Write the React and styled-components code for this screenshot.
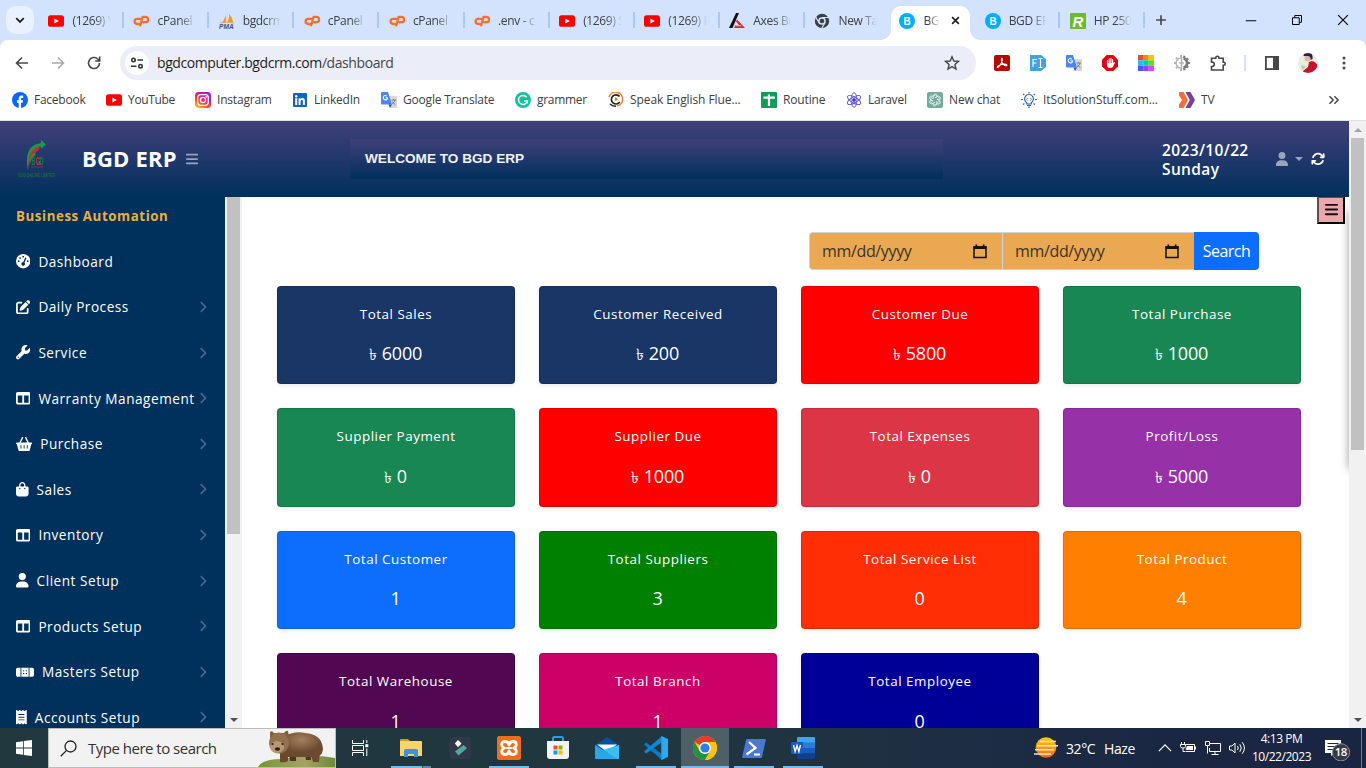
import React from "react";
import styled, { createGlobalStyle, css } from "styled-components";
import {
  FaGaugeHigh, FaPenToSquare, FaWrench, FaTableColumns, FaBasketShopping, FaBagShopping,
  FaUser, FaBandage, FaReceipt, FaAngleRight, FaBars, FaArrowsRotate,
} from "react-icons/fa6";

const Global = createGlobalStyle`
  *, *::before, *::after { box-sizing: border-box; }
  body { margin: 0; overflow: hidden; font-family: "Open Sans", "Noto Sans", sans-serif; }
  svg { display: block; flex: none; }
`;

const Screen = styled.div`
  width: 1366px; height: 768px; overflow: hidden;
  display: flex; flex-direction: column; background: #fff;
`;

/* ---------- browser chrome ---------- */
const TabStrip = styled.div`
  height: 40px; flex: none; display: flex; background: #d3e3fd; padding-left: 6px;
`;
const TabSearch = styled.div`
  width: 28px; height: 28px; margin: 6px 4px 0 0; border-radius: 10px; background: #e9f1fe;
  display: flex; align-items: center; justify-content: center;
`;
const TabBox = styled.div`
  width: 85.12px; height: 40px; flex: none; display: flex; align-items: center;
  padding: 1px 12px 0 10.3px; position: relative;
  &::after {
    content: ""; position: absolute; right: -1px; top: 12px; width: 2px; height: 16px;
    background: ${(p) => (p.$bar ? "#a8c7fa" : "transparent")};
  }
  ${(p) => p.$active && css`
    &::before {
      content: ""; position: absolute; inset: 6px 4px 0 2px; background: #fff; border-radius: 10px 10px 0 0;
    }
  `}
`;
const Flare = styled.i`
  position: absolute; bottom: 0; width: 10px; height: 10px;
  ${(p) => p.$left
    ? "left: -8px; background: radial-gradient(circle at 0 0, transparent 9.5px, #fff 10px);"
    : "right: -6px; background: radial-gradient(circle at 100% 0, transparent 9.5px, #fff 10px);"}
`;
const TabIcon = styled.span`width: 16px; height: 16px; flex: none; position: relative;`;
const TabTitle = styled.span`
  margin-left: 8.2px; width: ${(p) => p.$w || 39}px; overflow: hidden; white-space: nowrap; position: relative;
  font-size: 12px; line-height: 18px; color: #3c4043; font-weight: 500; letter-spacing: -0.35px;
  mask-image: linear-gradient(90deg, #000 ${(p) => (p.$w ? 30 : 58)}%, transparent 100%);
`;
const TabClose = styled.span`position: relative; margin-left: 11px;`;
const NewTab = styled.div`width: 34px; height: 40px; display: flex; align-items: center; justify-content: center;`;
const WindowButtons = styled.div`
  margin-left: auto; display: flex; align-items: center; gap: 34px; padding-right: 17px; height: 40px;
`;

const Toolbar = styled.div`
  height: 46px; flex: none; background: #fff; display: flex; align-items: center; border-radius: 8px 8px 0 0;
`;
const ToolbarBack = styled.div`background: #d3e3fd; flex: none;`;
const NavIcons = styled.div`display: flex; gap: 20px; padding-left: 14px; width: 120px;`;
const Omnibox = styled.div`
  width: 856px; height: 34px; border-radius: 17px; background: #ebeef8; display: flex; align-items: center; padding: 0 16px 0 5px;
`;
const SiteInfo = styled.span`
  width: 24px; height: 24px; border-radius: 50%; background: #fff; display: flex; align-items: center; justify-content: center;
`;
const Url = styled.span`
  margin-left: 8px; flex: 1; font-size: 14px; color: #1f1f1f; letter-spacing: -0.42px; white-space: nowrap; margin-top: -1px;
  span { color: #474747; }
`;
const Extensions = styled.div`
  display: flex; align-items: center; gap: 20px; padding-left: 18px; & > svg { width: 16px; height: 16px; }
`;
const Splitter = styled.i`width: 2px; height: 16px; background: #d3e3fd; margin: 0 -2px;`;
const Avatar = styled.span`width: 20px; height: 20px; border-radius: 50%; overflow: hidden; margin: 0 -2px;`;

const Bookmarks = styled.div`
  height: 35px; flex: none; display: flex; align-items: center; padding: 0 0 7px 12px; background: #fff;
  border-bottom: 1px solid #dfe3e3;
`;
const Bookmark = styled.div`
  width: ${(p) => p.$w}px; flex: none; display: flex; align-items: center; gap: 6px;
  font-size: 12px; line-height: 18px; color: #3c4043; white-space: nowrap; font-weight: 500; letter-spacing: ${(p) => p.$ls}px;
  svg { width: 16px; height: 16px; }
`;
const MoreMarks = styled.div`margin-left: auto; padding-right: 26px;`;

/* ---------- web page ---------- */
const Page = styled.div`height: 607px; flex: none; display: flex; overflow: hidden;`;
const Site = styled.div`width: 1349px; display: flex; flex-direction: column; height: 607px;`;
const Header = styled.header`
  height: 76px; flex: none; display: flex; align-items: center; color: #fff;
  background: linear-gradient(#413f7a, #00305c);
`;
const LogoBox = styled.div`width: 82px; padding-left: 17px;`;
const Brand = styled.div`
  width: 103px; font-weight: 700; font-size: 22px; line-height: 30px; padding-bottom: 2px; letter-spacing: 0.2px; white-space: nowrap;
`;
const Burger = styled.div`width: 165px; color: #9aa3bd;`;
const Marquee = styled.div`
  width: 593px; height: 40px; padding-left: 15px; background: linear-gradient(#413f7a, #00305c); color: #eef1f6;
  font: 600 13.6px/39px "Liberation Sans", Arial, sans-serif;
`;
const Today = styled.div`
  width: 113px; margin-left: 219px; font-weight: 600; font-size: 15.5px; line-height: 19px; letter-spacing: 0.36px; margin-top: 1px;
`;
const UserMenu = styled.div`display: flex; align-items: center; color: #9aa3bd; gap: 6px;`;
const Caret = styled.i`border: 4px solid transparent; border-top-color: currentColor; border-bottom: 0;`;
const Refresh = styled.div`margin-left: 8px; color: #fff;`;

const Body = styled.div`flex: 1; display: flex; min-height: 0;`;
const Sidebar = styled.nav`width: 225px; background: #00305c; overflow: hidden;`;
const Heading = styled.div`
  padding: 10px 16px 0; height: 41.6px; font-weight: 700; font-size: 13.3px; line-height: 19px; letter-spacing: 0.58px; color: #eaae43;
`;
const NavItem = styled.a`
  display: flex; align-items: center; height: 45.6px; padding: 0 16px; color: #fff;
  font-size: 13.6px; letter-spacing: 0.52px; white-space: nowrap; font-weight: 500;
  & > svg:first-child { height: 14.4px; width: ${(p) => p.$icon}px; }
  & > span { margin-left: 8px; flex: 1; width: 0; }
`;
const Arrow = styled(FaAngleRight)`color: #46688a; margin-right: -1px;`;

const Scroll = styled.div`
  width: 17px; flex: none; background: #f1f1f1; display: flex; flex-direction: column; align-items: center; justify-content: space-between;
`;
const Thumb = styled.div`width: 13px; height: ${(p) => p.$h}px; background: #c1c1c1;`;
const ScrollTop = styled.div`display: flex; flex-direction: column; align-items: center;`;
const ArrowBox = styled.div`
  height: 17px; display: flex; align-items: center;
  &::before {
    content: ""; border: 4px solid transparent;
    ${(p) => (p.$up ? "border-bottom-color: #a3a3a3; border-top: 0;" : "border-top-color: #505050; border-bottom: 0;")}
  }
`;

const Main = styled.main`
  flex: 1; position: relative; overflow: hidden; padding: 35px 48px 0 35px; background: #fff;
`;
const EdgeShadow = styled.i`
  position: absolute; top: 14px; right: -10px; width: 10px; height: 258px; box-shadow: 0 0 10px rgba(0, 0, 0, 0.4);
`;
const PanelToggle = styled.button`
  position: absolute; top: 0; right: 4px; width: 28px; height: 27px; padding: 0 0 2px; display: flex; align-items: center; justify-content: center;
  background: #eea5ab; border: 2px outset #000; border-top-width: 1px; color: #111;
`;
const Filter = styled.div`display: flex; height: 38px; margin-left: 532px; font-size: 16px;`;
const DateField = styled.div`
  width: ${(p) => p.$w}px; border: 1px solid #ced4da; border-right: 0; border-radius: ${(p) => (p.$first ? "4px 0 0 4px" : 0)};
  background: #eaa852; color: #3b3424; display: flex; align-items: center; justify-content: space-between; padding: 0 15px 0 12px;
  letter-spacing: -0.35px;
`;
const SearchButton = styled.button`
  width: 65px; border: 0; padding: 0; background: #0d6efd; color: #fff; border-radius: 0 4px 4px 0;
  font: 16px "Open Sans", sans-serif; letter-spacing: -0.5px;
`;
const Cards = styled.div`margin-top: 16px; display: grid; grid-template-columns: repeat(4, 238px); gap: 24px;`;
const Card = styled.div`
  height: 98.4px; border-radius: 4px; border: 1px solid rgba(0, 0, 0, 0.125); background: ${(p) => p.$c};
  box-shadow: 0 2px 4px rgba(0, 0, 0, 0.075); color: #fff; text-align: center; display: flex; flex-direction: column; align-items: center;
`;
const CardTitle = styled.div`margin-top: 17px; font-size: 13.4px; line-height: 20px; letter-spacing: 0.54px; font-weight: 500;`;
const CardValue = styled.div`margin-top: 16.4px; font-size: 18px; line-height: 26px; letter-spacing: -0.15px; height: 26px; padding-right: 1px;`;
const Taka = styled.span`font-size: 16px; margin-right: 5px; line-height: 20px;`;

/* ---------- taskbar ---------- */
const Taskbar = styled.div`
  height: 40px; flex: none; display: flex; color: #fff; background: linear-gradient(90deg, #21383f 0%, #203640 50%, #1a2743 85%, #1a2542);
`;
const Start = styled.div`width: 48px; display: flex; align-items: center; justify-content: center;`;
const SearchBox = styled.div`
  width: 288px; border: 1px solid #bcbcbc; background: #f2f2f2; display: flex; align-items: center; padding-left: 11px; color: #333;
  font-size: 15px; letter-spacing: -0.5px; overflow: hidden;
  & > span { margin-left: 11px; flex: 1; white-space: nowrap; }
`;
const Apps = styled.div`display: flex; gap: 1px; margin-left: 3px;`;
const AppCell = styled.div`
  width: 48px; height: 40px; display: flex; align-items: center; justify-content: center; position: relative;
  background: ${(p) => (p.$on ? "#4e5f67" : "none")};
  &::after {
    content: ""; position: absolute; bottom: 0; height: 2px; left: ${(p) => (p.$on ? 0 : 4)}px; right: ${(p) => (p.$on ? 0 : 4)}px;
    background: ${(p) => (p.$run === "many" ? "linear-gradient(90deg, #76b9ed 31px, #34525f 31px, #34525f 32px, #5c88ac 32px)" : p.$run ? "#76b9ed" : "none")};
  }
`;
const Tray = styled.div`margin-left: auto; display: flex; align-items: center; height: 40px;`;
const Weather = styled.div`
  display: flex; align-items: center; font-size: 14px; letter-spacing: -0.4px; width: 124px;
  & > b { font-weight: 400; margin-left: 8px; width: 38px; }
`;
const TrayIcons = styled.div`display: flex; align-items: center; gap: 8px; width: 95px;`;
const Clock = styled.div`
  width: 57px; font-size: 12px; line-height: 18px; letter-spacing: -0.45px; white-space: nowrap;
  display: flex; flex-direction: column; align-items: center;
`;
const Notice = styled.div`width: 51px; padding-left: 15px;`;
const DesktopEdge = styled.i`width: 5px; height: 40px; border-left: 1px solid #6f788a;`;

/* ---------- small drawings ---------- */
const YouTube = () => (
  <svg width="16" height="16" viewBox="0 0 16 16"><rect y="2.2" width="16" height="11.6" rx="2.6" fill="#f00" /><path d="M6.4 5.4v5.2L10.8 8z" fill="#fff" /></svg>
);
const CPanel = () => (
  <svg width="17" height="16" viewBox="0 0 17 16" fill="none" stroke="#ff6c2c" strokeWidth="2.300" strokeLinecap="round" strokeLinejoin="round">
    <path d="M7.200 5.800H4.300a2.600 2.600 0 0 0-.2 5.200H6" /><path d="M7.200 12.300 9.600 3.800h2.800a2.700 2.700 0 0 1 0 5.400h-2.300" />
  </svg>
);
const Pma = () => (
  <svg width="16" height="16" viewBox="0 0 16 16">
    <path d="M2 10Q6 7 6.300 2Q7.800 6 7 10zM7.500 10Q10.500 6 10 1Q14 5 14 10z" fill="#f89c0e" /><path d="M1 10Q7 8.600 15 10" stroke="#d9b27a" fill="none" />
    <text x="0" y="15.500" fontSize="6.600" fontWeight="700" fontStyle="italic" fontFamily="Liberation Sans" fill="#4b4b7c">PMA</text>
  </svg>
);
const Axes = () => (
  <svg width="16" height="16" viewBox="0 0 16 16"><path d="M0 15 7 0h3L3.500 15z" fill="#111" /><path d="M8 6.500 16 15H5l1.600-3H10L7 8.600z" fill="#e0262e" /><path d="M7 12h4.500l1.200 1.200H6.500z" fill="#d3e3fd" opacity=".7" /></svg>
);
const ChromeGrey = () => (
  <svg width="16" height="16" viewBox="0 0 16 16"><circle cx="8" cy="8" r="7.200" fill="#3c4043" /><circle cx="8" cy="8" r="3.100" fill="none" stroke="#d3e3fd" strokeWidth="1.500" /><path d="M8 4.500h7M5 9.700 1.600 3.900M10.900 9.700 7.600 15.500" stroke="#d3e3fd" strokeWidth="1.200" /></svg>
);
const BLogo = () => (
  <svg width="16" height="16" viewBox="0 0 16 16"><circle cx="8" cy="8" r="8" fill="#00aeff" /><text x="8" y="11.600" textAnchor="middle" fontSize="10" fontWeight="700" fontFamily="Liberation Sans" fill="#fff">B</text></svg>
);
const RLogo = () => (
  <svg width="16" height="16" viewBox="0 0 16 16"><rect width="16" height="16" rx="1" fill="#6cbb2b" /><text x="8" y="13.500" textAnchor="middle" fontSize="15" fontWeight="700" fontStyle="italic" fontFamily="Liberation Sans" fill="#fff">R</text></svg>
);
const Facebook = () => (
  <svg viewBox="0 0 16 16"><circle cx="8" cy="8" r="8" fill="#0866ff" /><path d="M6.700 16v-5.300H4.900V8.200h1.800V7c0-2.300 1.100-3.400 3.100-3.400.6 0 1.100.1 1.400.2v2.100h-1c-.9 0-1.200.4-1.200 1.300v1h2.100l-.4 2.500H9V16z" fill="#fff" /></svg>
);
const Instagram = () => (
  <svg viewBox="0 0 16 16">
    <defs><linearGradient id="ig" x1="0.2" y1="1" x2="0.8" y2="0"><stop offset="0" stopColor="#ffc800" /><stop offset=".35" stopColor="#ff3d3d" /><stop offset=".65" stopColor="#e0158f" /><stop offset="1" stopColor="#8a22f0" /></linearGradient></defs>
    <rect width="16" height="16" rx="3.500" fill="url(#ig)" /><rect x="2.700" y="2.700" width="10.600" height="10.600" rx="3" fill="none" stroke="#fff" strokeWidth="1.300" /><circle cx="8" cy="8" r="2.600" fill="none" stroke="#fff" strokeWidth="1.300" /><circle cx="11.100" cy="4.900" r=".8" fill="#fff" />
  </svg>
);
const LinkedIn = () => (
  <svg viewBox="0 0 16 16"><rect x="1" y="1" width="14" height="14" rx="1" fill="#0a66c2" /><path d="M3.200 6.300h2V13h-2zM6.600 6.300h1.900v.9c.4-.7 1.100-1.100 2-1.100 1.800 0 2.400 1.100 2.400 2.900v4h-2V9.400c0-.9-.3-1.500-1.100-1.500s-1.200.6-1.200 1.500V13h-2z" fill="#fff" /><circle cx="4.200" cy="4.200" r="1.200" fill="#fff" /></svg>
);
const Translate = () => (
  <svg viewBox="0 0 16 16"><path d="M6 4h9a1 1 0 0 1 1 1v10a1 1 0 0 1-1 1H9z" fill="#d5d7da" /><path d="M1 0h6l4 12.500H1a1 1 0 0 1-1-1V1a1 1 0 0 1 1-1z" fill="#4a86f0" /><path d="M7.500 12.500H11L9 16z" fill="#2358c4" /><path d="M6.800 5.700H4.600M6.600 5.800a2.200 2.200 0 1 1-.8-1.800" stroke="#fff" fill="none" strokeWidth="1.100" /><path d="M10.500 8h4.500M12.700 7v1M14 8q-.7 3-3 4M11.500 9.500q1 2.200 3 3.300" stroke="#757b82" fill="none" strokeWidth=".9" /></svg>
);
const Grammarly = () => (
  <svg viewBox="0 0 16 16"><circle cx="8" cy="8" r="8" fill="#15c39a" /><path d="M11.600 5.200A4.500 4.500 0 1 0 12.400 9H9.200M12.400 9v2.500" stroke="#fff" strokeWidth="1.400" fill="none" /></svg>
);
const SpeakC = () => (
  <svg viewBox="0 0 16 16"><path d="M1 5A7 7 0 1 1 9 14" fill="none" stroke="#f27a2c" strokeWidth="1.500" /><path d="M11.600 4.600A4.600 4.600 0 1 0 11.800 10" fill="none" stroke="#222" strokeWidth="1.600" /><path d="M7 5 10.400 7.200 7 9.300z" fill="#f27a2c" /><path d="M2 12q2.500 2.500 6 2.200" fill="none" stroke="#222" strokeWidth="1.300" /></svg>
);
const Sheets = () => (
  <svg viewBox="0 0 16 16"><rect width="16" height="16" rx="1" fill="#0f9d58" /><path d="M2.500 5.700h11.500M8 2.500V14" stroke="#fff" strokeWidth="2.200" /></svg>
);
const Atom = () => (
  <svg viewBox="0 0 16 16" fill="none" stroke="#5a55e0" strokeWidth=".9"><ellipse cx="8" cy="8" rx="7.300" ry="2.900" transform="rotate(30 8 8)" /><ellipse cx="8" cy="8" rx="7.300" ry="2.900" transform="rotate(90 8 8)" /><ellipse cx="8" cy="8" rx="7.300" ry="2.900" transform="rotate(150 8 8)" /><circle cx="8" cy="8" r="1.500" fill="#3530d0" /></svg>
);
const Gpt = () => (
  <svg viewBox="0 0 16 16"><rect width="16" height="16" rx="2" fill="#74aa9c" />{[0, 60, 120, 180, 240, 300].map((a) => <path key={a} d="M8 5.800 10.200 4.500 12.600 5.900V8.600M6.100 6.900V4.200A2.400 2.400 0 0 1 10.200 2.700" transform={`rotate(${a} 8 8)`} fill="none" stroke="#e9f5f1" strokeWidth=".7" />)}</svg>
);
const Bulb = () => (
  <svg viewBox="0 0 16 16" fill="none" stroke="#2b5fa0" strokeWidth="1.100"><path d="M5.700 12V10.700A4.400 4.400 0 1 1 10.300 10.700V12z" /><path d="M6 13.500h4M7 15.200h2M8 0v1.500M2 1.800l1.300 1.200M14 1.800l-1.300 1.200M0 7.500h2M14 7.500h2M2 12.500l1.400-1M14 12.500l-1.400-1" /><path d="M6.800 6 5.500 7.300l1.300 1.300M9.200 6l1.300 1.300-1.300 1.300" strokeWidth=".8" /></svg>
);
const Tv = () => (
  <svg viewBox="0 0 16 16"><path d="M0 0h4.500l4.500 8-4.500 8H0V12.500L3 8 0 3.500z" fill="#f36f3a" /><path d="M6.500 0h5L16 8l-4.500 8h-5l4.300-8z" fill="#7b3f98" /></svg>
);
const Stroke = ({ d, s = 16, c = "#474747", w = 1.6, ...r }) => (
  <svg width={s} height={s} viewBox="0 0 16 16" fill="none" stroke={c} strokeWidth={w} {...r}><path d={d} /></svg>
);
const Tune = () => (
  <svg width="14" height="14" viewBox="0 0 14 14" fill="none" stroke="#333" strokeWidth="1.600"><circle cx="3.500" cy="4" r="1.700" /><path d="M7.500 4H13M1 10.200h5.500" /><circle cx="10.500" cy="10.200" r="1.700" /></svg>
);
const Acrobat = () => (
  <svg viewBox="0 0 16 16"><rect width="16" height="16" rx="2" fill="#b30b00" /><path d="M7.600 3.300c1.500 0 .5 4-1.600 7-1.400 2-2.700 2.700-2.800 1.800-.1-1.200 4-3 7-3 3.300 0 3.200 1.700 1.800 1.700-2.200 0-5.500-4.300-4.400-7.500z" fill="none" stroke="#fff" strokeWidth="1.100" /></svg>
);
const Fi = () => (
  <svg viewBox="0 0 16 16"><path d="M0 0h11l5 4v8l-5 4H0z" fill="#3fa3e3" /><path d="M3 12V4.500h4M3 8h3.500M8.500 3.500h1.300q.7 0 .7.700v7.600q0 .7-.7.700H8.500M12.500 3.500h-1.300q-.7 0-.7.700M12.500 12.500h-1.300q-.7 0-.7-.7" stroke="#fff" fill="none" strokeWidth="1.100" /></svg>
);
const Hand = () => (
  <svg viewBox="0 0 16 16"><path d="M4.700 0h6.600L16 4.700v6.600L11.300 16H4.700L0 11.300V4.700z" fill="#e4000f" /><path d="M5.500 9V5.500M7.200 8V3.800M8.900 8V3.500M10.600 9V4.700" stroke="#fff" strokeWidth="1.200" strokeLinecap="round" /><path d="M4.900 8h6.300l1.200-1q.8.200.4 1L11 11.700Q10 13 8.300 13 4.900 13 4.900 9.700z" fill="#fff" /></svg>
);
const Rainbow = () => (
  <svg viewBox="0 0 16 16"><path d="M0 0h5.300v5.300H0z" fill="#ff4136" /><path d="M5.300 0h5.400v5.300H5.300z" fill="#ff8a00" /><path d="M10.700 0H16v5.300h-5.300z" fill="#ffc400" /><path d="M0 5.300h5.300v5.400H0z" fill="#28b8f5" /><path d="M5.300 5.300h5.400v5.400H5.300z" fill="#10cf8c" /><path d="M10.700 5.300H16v5.400h-5.300z" fill="#5fdd10" /><path d="M0 10.700h5.300V16H0z" fill="#4a55ff" /><path d="M5.300 10.700h5.400V16H5.300z" fill="#a43cff" /><path d="M10.700 10.700H16V16h-5.300z" fill="#f23cf0" /></svg>
);
const GearHalf = () => (
  <svg viewBox="0 0 16 16"><path d="M7.500 2.700a5.300 5.300 0 0 0 0 10.600z" fill="none" stroke="#b5b5b5" strokeWidth="1.600" /><path d="M7 0v2M2 2.500l1.500 1.500M0 8h2.200M2 13.500 3.500 12M7 16v-2" stroke="#b5b5b5" strokeWidth="2" /><path d="M9.500 3.200a5 5 0 0 1 0 9.600" fill="none" stroke="#7b7b7b" strokeWidth="2.600" /><path d="M10.500.8 10 3M14.200 3.500l-2 1.500M16 8h-3M14.200 12.500l-2-1.500M10.500 15.200 10 13" stroke="#7b7b7b" strokeWidth="2.200" /><path d="M5 8h5" stroke="#999" /></svg>
);
const Puzzle = () => (
  <Stroke w={1.6} d="M1.500 3.300h4.300V2.800a1.600 1.600 0 0 1 3.200 0v.5h4.200v4h.5a1.500 1.500 0 0 1 0 3h-.5v4.700H1.500V11.500h.6a2.200 2.200 0 0 0 0-4.400h-.6z" />
);
const SidePanel = () => (
  <svg viewBox="0 0 16 16"><rect x="1.900" y="1.900" width="12.200" height="12.200" fill="none" stroke="#474747" strokeWidth="1.800" /><path d="M9 2h5v12H9z" fill="#474747" /></svg>
);
const Portrait = () => (
  <svg width="20" height="20" viewBox="0 0 20 20"><rect width="20" height="20" fill="#e6eee0" /><path d="M6 20q-2-1-1-2l5-4 1-5 3-1q6 1 6 9l-3 3z" fill="#c8132c" /><ellipse cx="9.500" cy="5" rx="3" ry="3.600" fill="#e8b49c" /><path d="M5.500 3q0-4 5-3.500t4 6.500l-2 1Q13 3 9.500 3T5.500 3z" fill="#2b1f5a" /><path d="M3 13q3-2 5 1l-4 3z" fill="#b9d5a5" /></svg>
);
const Logo = () => (
  <svg width="40" height="42" viewBox="0 0 40 42">
    <path d="M11 33Q6 7 24 5V2l5 4.500-5 4.500V8.500Q12 9 11 33z" fill="#179a4c" /><path d="M11.300 28Q10.500 11 23 8.500l-2 4.500Q14 14 11.300 28z" fill="#e0222f" /><path d="M12.300 27Q12.500 17 18.500 14v3q-3.500 2-6.200 10z" fill="#179a4c" />
    <g fontFamily="Liberation Sans" fontWeight="700">
      <text x="14.500" y="26.500" fontSize="10" textLength="12" lengthAdjust="spacingAndGlyphs" fill="#1c7c40">B<tspan fill="#e0222f">G</tspan>D</text>
      <text x="1" y="38.500" fontSize="5.500" textLength="37" lengthAdjust="spacingAndGlyphs" fill="#176a3f">BGD ONLINE LIMITED</text>
    </g>
    <path d="M14 29h12" stroke="#8d2743" />
  </svg>
);
const Calendar = () => (
  <svg width="14" height="15" viewBox="0 0 14 15"><path d="M1 3h12v10.500H1z" fill="none" stroke="#111" strokeWidth="1.500" /><path d="M.5 2.200h13v2.800H.5zM2.500.5h1.700V3H2.500zM9.800.5h1.700V3H9.800z" fill="#111" /></svg>
);

const Wombat = () => (
  <svg width="77" height="38" viewBox="0 0 77 38">
    <defs><radialGradient id="fur" cx=".5" cy=".3"><stop offset="0" stopColor="#a5815c" /><stop offset="1" stopColor="#6b4a30" /></radialGradient><linearGradient id="hill" x1="0" x2="1"><stop offset="0" stopColor="#75963a" /><stop offset=".6" stopColor="#a4a365" /><stop offset="1" stopColor="#6f8a38" /></linearGradient></defs>
    <path d="M0 38Q4 30 24 30 50 24 77 29V38z" fill="url(#hill)" />
    <path d="M22 20h8v12q-3 2-8 1zM52 22h10l-1 11h-6z" fill="#6b4930" /><path d="M31 24h7v8h-6zM47 24h6v7h-5z" fill="#503521" />
    <path d="M22 10Q34 1 47 4 64 5 65 20 64 29 55 28H30Q20 26 22 10z" fill="url(#fur)" />
    <path d="M12 3Q14 1 16 4h10q2-3 4-2l1 7H12z" fill="#85603f" /><ellipse cx="21" cy="14" rx="10" ry="10.500" fill="#93704e" /><ellipse cx="19" cy="18" rx="7" ry="6" fill="#b79775" /><ellipse cx="19.500" cy="20" rx="2.600" ry="1.800" fill="#2b1a12" /><circle cx="14.500" cy="15" r="1.100" fill="#2b1a12" /><circle cx="24.500" cy="15" r="1.100" fill="#2b1a12" />
  </svg>
);
const TaskView = () => (
  <svg width="17" height="16" viewBox="0 0 17 16" fill="none" stroke="#fff"><path d="M.5 0v3.500H11.500V0M.5 16v-3.500H11.500V16" /><path d="M.5 5.500h11v5H.5zM14.800 0v3M14.800 8.500V16" /><path d="M13.300 4.200h3v3h-3z" fill="#fff" stroke="none" /></svg>
);
const Explorer = () => (
  <svg width="22" height="20" viewBox="0 0 22 20"><path d="M0 2q0-1 1-1h7l2 2H0z" fill="#d79a16" /><path d="M0 3h21q1 0 1 1v14H0z" fill="#fcd367" /><path d="M4 19v-6q0-2 2-2h10q2 0 2 2v6h-4v-3H8v3z" fill="#3f92dc" /></svg>
);
const Filmora = () => (
  <svg width="22" height="22" viewBox="0 0 22 22"><rect width="22" height="22" rx="4" fill="#30394a" /><path d="m9 3 3.600 3.500L9 10.200 5.800 6.500z" fill="#fff" /><path d="M6 14.500 14.500 8l3.500 3.200L9.500 18.500z" fill="#52a79a" /></svg>
);
const Xampp = () => (
  <svg width="24" height="24" viewBox="0 0 24 24"><rect width="24" height="24" rx="2.500" fill="#ee6c1a" /><g fill="none" stroke="#fff" strokeWidth="2.800" strokeLinejoin="round" strokeLinecap="round"><path d="M12 9.200Q11.500 5.500 8 5.500T4.700 8.500Q4.700 11 7.200 12 4.700 13 4.700 15.500 4.700 18.500 8 18.500T12 14.800Q12.500 18.500 16 18.500T19.300 15.500Q19.300 13 16.800 12 19.300 11 19.300 8.500 19.300 5.500 16 5.500T12 9.200z" /><path d="M9.500 12h5" strokeWidth="2" /></g></svg>
);
const Store = () => (
  <svg width="24" height="24" viewBox="0 0 24 24"><path d="M7 6V2.500Q7 1 8.500 1h7Q17 1 17 2.500V6" fill="none" stroke="#27a0e2" strokeWidth="2" /><path d="M1 5h22v15q0 3-3 3H4q-3 0-3-3z" fill="#f3f3f3" /><path d="M7.500 9.500h4v4h-4z" fill="#f25022" /><path d="M12.500 9.500h4v4h-4z" fill="#7fba00" /><path d="M7.500 14.500h4v4h-4z" fill="#00a4ef" /><path d="M12.500 14.500h4v4h-4z" fill="#ffb900" /></svg>
);
const Mail = () => (
  <svg width="24" height="22" viewBox="0 0 24 22"><path d="M0 8 12 0l12 8-3 5H3z" fill="#0a4fa0" /><path d="M2 7.500h20L12 15z" fill="#f2f7fb" /><path d="M0 8l12 7.500L24 8v13q0 1-1 1H1q-1 0-1-1z" fill="#28a8ea" /><path d="M24 8v13q0 1-1 1L8 13z" fill="#36c0f4" /></svg>
);
const VsCode = () => (
  <svg width="24" height="24" viewBox="0 0 24 24"><path d="M17.500 0 24 3v18l-6.500 3z" fill="#2aa9f2" /><path d="M0 8.500 2 6.500l16 11.500v6z" fill="#0a7bc4" /><path d="M0 15.500 2 17.500 18 6V0z" fill="#0b8ad6" /><path d="M17.500 0v24l.8-.4V.4z" fill="#2aa9f2" /></svg>
);
const Chrome = () => (
  <svg width="24" height="24" viewBox="0 0 24 24"><circle cx="12" cy="12" r="12" fill="#fbc116" /><path d="M12 12 1.600 6A12 12 0 0 1 22.400 6H12z" fill="#e33b2e" /><path d="M1.600 6 6.800 15 17.200 15 12 24A12 12 0 0 1 1.600 6z" fill="#229342" /><path d="M12 24 17.200 15 17.200 9 12 6h10.400A12 12 0 0 1 12 24z" fill="#fbc116" /><circle cx="12" cy="12" r="6" fill="#fff" /><circle cx="12" cy="12" r="4.600" fill="#2f7de9" /></svg>
);
const Shell = () => (
  <svg width="24" height="19" viewBox="0 0 24 19"><path d="M5 0h18q1 0 .8 1L20 18q-.3 1-1 1H1q-1 0-.8-1L4 1q.2-1 1-1z" fill="#4c78cd" /><path d="m7 3 6.500 6L4.500 15.500M12 15.500h6" stroke="#fff" strokeWidth="2.200" fill="none" /></svg>
);
const Word = () => (
  <svg width="24" height="22" viewBox="0 0 24 22"><path d="M6 1q0-1 1-1h16q1 0 1 1v5H6z" fill="#41a5ee" /><path d="M6 5.500h18V11H6z" fill="#2b7cd3" /><path d="M6 11h18v5.500H6z" fill="#185abd" /><path d="M6 16.500h18V21q0 1-1 1H7q-1 0-1-1z" fill="#103f91" /><rect y="5" width="12" height="12" rx="1" fill="#185abd" /><path d="m2.500 8 1.600 6.500L6 8.500l1.900 6L9.500 8" stroke="#fff" strokeWidth="1.400" fill="none" /></svg>
);
const Haze = () => (
  <svg width="24" height="22" viewBox="0 0 24 22"><defs><linearGradient id="sun" x2="0" y2="1"><stop offset="0" stopColor="#ffcd0f" /><stop offset="1" stopColor="#f0680d" /></linearGradient></defs><circle cx="12" cy="10.500" r="10.300" fill="url(#sun)" /><path d="M6 4.500h16M3 8.700h21M1 12.800h19M0 17h17" stroke="#f1e3cd" strokeWidth="1.600" /></svg>
);
const Battery = () => (
  <svg width="17" height="14" viewBox="0 0 17 14" fill="none" stroke="#fff"><path d="M5.500 3.500h9v7h-9M15.500 5.500v3" /><path d="M7 5h6v4H5.500z" fill="#fff" stroke="none" /><path d="M1.500 1v2M4.500 1v2M.5 3.500h5v2q0 1.500-2.500 1.500T.5 5.500zM3 7v3.500h2" /></svg>
);
const Network = () => (
  <svg width="16" height="14" viewBox="0 0 16 14" fill="none" stroke="#fff"><path d="M5 2.500h10.500v8H4.500V7M10 10.500V13M6.500 13.500h7M.5.500h4v4h-4zM2.500 4.500v8" /></svg>
);
const Volume = () => (
  <svg width="17" height="14" viewBox="0 0 17 14" fill="none" stroke="#fff"><path d="M.5 5h2.500l3-3v10L3 9H.5zM8.500 5q1.500 2 0 4M10.800 3.200q3 3.800 0 7.600M13.200 1.300q4.500 5.700 0 11.400" /></svg>
);
const NoticeIcon = () => (
  <svg width="26" height="26" viewBox="0 0 26 26"><path d="M0 5h16v13H9l-3 3v-3H0z" fill="#fff" /><path d="M2.500 8.500h11M2.500 11.500h11M2.500 14.500h6" stroke="#1b2b40" /><circle cx="16" cy="19" r="8.500" fill="none" /><g transform="translate(0 2.500)"><circle cx="16" cy="14.800" r="8.600" fill="#353b44" stroke="#8b9099" /><text x="15.700" y="18.800" textAnchor="middle" fontSize="11.500" fontWeight="600" fontFamily="Open Sans" letterSpacing="-.7" fill="#fff">18</text></g></svg>
);

/* ---------- data ---------- */
const tabs = [
  [YouTube, "(1269) Y"], [CPanel, "cPanel"], [Pma, "bgdcrm"], [CPanel, "cPanel"], [CPanel, "cPanel"], [CPanel, ".env - c"],
  [YouTube, "(1269) S"], [YouTube, "(1269) F"], [Axes, "Axes Bu"], [ChromeGrey, "New Tab", "none"], [BLogo, "BGD", "active"], [BLogo, "BGD ER"], [RLogo, "HP 250"],
];
const bookmarks = [
  [Facebook, "Facebook", 94, -0.25], [YouTube, "YouTube", 89, -0.33], [Instagram, "Instagram", 97, -0.2], [LinkedIn, "LinkedIn", 89, -0.22], [Translate, "Google Translate", 134, -0.2],
  [Grammarly, "grammer", 93, -0.3], [SpeakC, "Speak English Flue...", 153, -0.08], [Sheets, "Routine", 85, -0.15], [Atom, "Laravel", 81, -0.22], [Gpt, "New chat", 94, -0.12],
  [Bulb, "ItSolutionStuff.com...", 158, -0.08], [Tv, "TV", 60, 0],
];
const nav = [
  [FaGaugeHigh, "Dashboard", 14.4], [FaPenToSquare, "Daily Process", 14.4], [FaWrench, "Service", 14.4], [FaTableColumns, "Warranty Management", 14.4],
  [FaBasketShopping, "Purchase", 16.2], [FaBagShopping, "Sales", 12.6], [FaTableColumns, "Inventory", 14.4], [FaUser, "Client Setup", 12.6],
  [FaTableColumns, "Products Setup", 14.4], [FaBandage, "Masters Setup", 18], [FaReceipt, "Accounts Setup", 10.8],
];
const cards = [
  ["Total Sales", "6000", "#193667", true], ["Customer Received", "200", "#193667", true], ["Customer Due", "5800", "#ff0000", true], ["Total Purchase", "1000", "#198754", true],
  ["Supplier Payment", "0", "#198754", true], ["Supplier Due", "1000", "#ff0000", true], ["Total Expenses", "0", "#dc3545", true], ["Profit/Loss", "5000", "#9631a8", true],
  ["Total Customer", "1", "#0d6efd"], ["Total Suppliers", "3", "#008000"], ["Total Service List", "0", "#ff2e05"], ["Total Product", "4", "#ff8000"],
  ["Total Warehouse", "1", "#520752"], ["Total Branch", "1", "#cc0066"], ["Total Employee", "0", "#000099"],
];
const apps = [
  [Explorer, "many"], [Filmora], [Xampp, "one"], [Store], [Mail], [VsCode, "one"], [Chrome, "one", true], [Shell, "one"], [Word, "one"],
];

export default function App() {
  return (
    <Screen>
      <Global />
      <TabStrip>
        <TabSearch><Stroke s={12} w={2.4} c="#222" d="M3 5.500 8 10.500 13 5.500" /></TabSearch>
        {tabs.map(([Icon, title, mode], i) => (
          <TabBox key={i} $bar={!mode} $active={mode === "active"}>
            {mode === "active" && <><Flare $left /><Flare /></>}
            <TabIcon><Icon /></TabIcon>
            <TabTitle $w={mode === "active" ? 16 : 0}>{title}</TabTitle>
            {mode === "active" && <TabClose><Stroke s={9} w={3} c="#222" d="M2 2 14 14M14 2 2 14" /></TabClose>}
          </TabBox>
        ))}
        <NewTab><Stroke s={12} w={2.2} d="M8 1.500V14.500M1.500 8H14.500" /></NewTab>
        <WindowButtons>
          <Stroke s={12} w={1.3} c="#000" d="M1 9H15" />
          <Stroke s={12} w={1.3} c="#000" d="M2 5h9v9H2zM5 5V2h9v9h-3" />
          <Stroke s={12} w={1.5} c="#000" d="M1.500 1.500 14.500 14.500M14.500 1.500 1.500 14.500" />
        </WindowButtons>
      </TabStrip>
      <ToolbarBack>
        <Toolbar>
          <NavIcons>
            <Stroke d="M14 8H3M8 2.500 2.500 8 8 13.500" />
            <Stroke c="#aaa" d="M2 8H13M8 2.500 13.500 8 8 13.500" />
            <Stroke d="M13.500 8A5.500 5.500 0 1 1 11.800 4L13.500 5.700M13.700 1.500V6H9.200" />
          </NavIcons>
          <Omnibox>
            <SiteInfo><Tune /></SiteInfo>
            <Url>bgdcomputer.bgdcrm.com<span>/dashboard</span></Url>
            <Stroke w={1.4} d="M8 1.800 9.800 6l4.700.4-3.600 3 1.100 4.600L8 11.600 4 14l1.100-4.600-3.600-3L6.200 6z" />
          </Omnibox>
          <Extensions>
            <Acrobat /><Fi /><Translate /><Hand /><Rainbow /><GearHalf /><Puzzle /><Splitter /><SidePanel />
            <Avatar><Portrait /></Avatar>
            <svg viewBox="0 0 16 16" fill="#474747"><circle cx="8" cy="3" r="1.500" /><circle cx="8" cy="8" r="1.500" /><circle cx="8" cy="13" r="1.500" /></svg>
          </Extensions>
        </Toolbar>
      </ToolbarBack>
      <Bookmarks>
        {bookmarks.map(([Icon, name, w, ls]) => <Bookmark key={name} $w={w} $ls={ls}><Icon /><span>{name}</span></Bookmark>)}
        <MoreMarks><Stroke s={12} w={2} d="M2 3 7 8 2 13M8.500 3 13.500 8 8.500 13" /></MoreMarks>
      </Bookmarks>

      <Page>
        <Site>
          <Header>
            <LogoBox><Logo /></LogoBox>
            <Brand>BGD ERP</Brand>
            <Burger><FaBars size={14} /></Burger>
            <Marquee>WELCOME TO BGD ERP</Marquee>
            <Today>2023/10/22<br />Sunday</Today>
            <UserMenu><FaUser size={14} /><Caret /></UserMenu>
            <Refresh><FaArrowsRotate size={14} /></Refresh>
          </Header>
          <Body>
            <Sidebar>
              <Heading>Business Automation</Heading>
              {nav.map(([Icon, name, width], i) => (
                <NavItem key={name} $icon={width}><Icon /><span>{name}</span>{i > 0 && <Arrow size={14} />}</NavItem>
              ))}
            </Sidebar>
            <Scroll><Thumb $h={337} /><ArrowBox /></Scroll>
            <Main>
              <Filter>
                <DateField $w={193} $first>mm/dd/yyyy<Calendar /></DateField>
                <DateField $w={192}>mm/dd/yyyy<Calendar /></DateField>
                <SearchButton>Search</SearchButton>
              </Filter>
              <Cards>
                {cards.map(([title, value, color, money]) => (
                  <Card key={title} $c={color}>
                    <CardTitle>{title}</CardTitle>
                    <CardValue>{money && <Taka>৳</Taka>}{value}</CardValue>
                  </Card>
                ))}
              </Cards>
              <EdgeShadow />
              <PanelToggle><FaBars size={15} /></PanelToggle>
            </Main>
          </Body>
        </Site>
        <Scroll><ScrollTop><ArrowBox $up /><Thumb $h={312} /></ScrollTop><ArrowBox /></Scroll>
      </Page>

      <Taskbar>
        <Start><svg width="16" height="16" viewBox="0 0 16 16" fill="#fff"><path d="M0 2.200 7 1.200V7.600H0zM7.800 1.100 16 0v7.600H7.800zM0 8.400h7v6.400l-7-1zM7.800 8.400H16V16l-8.200-1.100z" /></svg></Start>
        <SearchBox>
          <svg width="17" height="17" viewBox="0 0 17 17" fill="none" stroke="#222" strokeWidth="1.300"><circle cx="10.500" cy="6.500" r="5.500" /><path d="M6.600 10.400.7 16.300" /></svg>
          <span>Type here to search</span>
          <Wombat />
        </SearchBox>
        <Start><TaskView /></Start>
        <Apps>{apps.map(([Icon, run, on], i) => <AppCell key={i} $run={run} $on={on}><Icon /></AppCell>)}</Apps>
        <Tray>
          <Weather><Haze /><b>32°C</b>Haze</Weather>
          <TrayIcons>
            <Stroke s={14} w={1.400} c="#fff" d="M1 11.500 8 4.500 15 11.500" /><Battery /><Network /><Volume />
          </TrayIcons>
          <Clock><span>4:13 PM</span><span>10/22/2023</span></Clock>
          <Notice><NoticeIcon /></Notice>
          <DesktopEdge />
        </Tray>
      </Taskbar>
    </Screen>
  );
}
